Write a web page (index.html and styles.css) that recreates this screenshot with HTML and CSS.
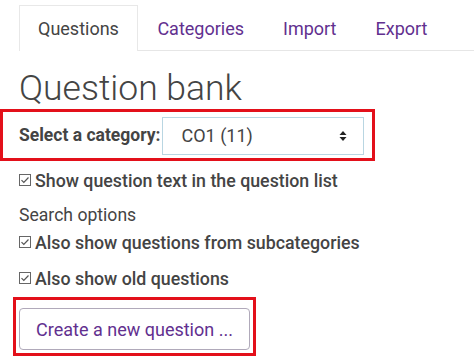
FILE: index.html
```html
<!DOCTYPE html>
<html>
<head>
<meta charset="utf-8">
<link rel="stylesheet" href="styles.css">
</head>
<body>
<div class="page">
  <ul class="tabs">
    <li class="tab active">Questions</li>
    <li class="tab">Categories</li>
    <li class="tab">Import</li>
    <li class="tab">Export</li>
  </ul>
  <h1 class="title">Question bank</h1>
  <div class="hl hl-cat">
    <label class="cat-label">Select a category:</label>
    <div class="select">
      <span>CO1 (11)</span>
      <svg class="arrows" width="8" height="12" viewBox="0 0 8 12"><path d="M4 1 L7.5 5 H0.5 Z M4 11 L0.5 7 H7.5 Z" fill="#222"/></svg>
    </div>
  </div>
  <div class="check first">
    <svg class="box" width="12" height="12" viewBox="0 0 12 12"><rect x="0.5" y="0.5" width="11" height="11" fill="#fff" stroke="#666"/><path d="M2.5 6.2 L4.8 8.5 L9.5 3.5" fill="none" stroke="#555" stroke-width="1.2"/></svg>
    <span>Show question text in the question list</span>
  </div>
  <div class="search">Search options</div>
  <div class="check second">
    <svg class="box" width="12" height="12" viewBox="0 0 12 12"><rect x="0.5" y="0.5" width="11" height="11" fill="#fff" stroke="#666"/><path d="M2.5 6.2 L4.8 8.5 L9.5 3.5" fill="none" stroke="#555" stroke-width="1.2"/></svg>
    <span>Also show questions from subcategories</span>
  </div>
  <div class="check third">
    <svg class="box" width="12" height="12" viewBox="0 0 12 12"><rect x="0.5" y="0.5" width="11" height="11" fill="#fff" stroke="#666"/><path d="M2.5 6.2 L4.8 8.5 L9.5 3.5" fill="none" stroke="#555" stroke-width="1.2"/></svg>
    <span>Also show old questions</span>
  </div>
  <div class="hl hl-btn">
    <button class="btn">Create a new question ...</button>
  </div>
</div>
</body>
</html>
```

FILE: styles.css
```css
html, body {
  margin: 0;
  padding: 0;
  background: #fff;
}
body {
  font-family: Roboto, "Liberation Sans", sans-serif;
  color: #444;
  width: 474px;
  height: 363px;
  overflow: hidden;
}
.page {
  padding: 5px 0 0 19px;
}
.tabs {
  list-style: none;
  margin: 0;
  padding: 0;
  display: flex;
  border-bottom: 1px solid #e6e6e6;
  height: 45px;
}
.tab {
  padding: 0 18.5px;
  font-size: 18px;
  line-height: 45px;
  color: #62308f;
  border: 1px solid transparent;
  border-bottom: none;
}
.tab.active {
  color: #444;
  border-color: #e8e8e8;
  background: #fff;
  margin-bottom: -1px;
  height: 45px;
  padding: 0 18px;
}
.title {
  margin: 17px 0 1px 0;
  font-weight: 300;
  font-size: 35.5px;
  line-height: 40px;
  color: #444;
}
.hl {
  border: 3px solid #e3101a;
}
.hl-cat {
  margin: 0 0 0 -19px;
  width: 353px;
  height: 46px;
  display: flex;
  align-items: center;
  padding-left: 16px;
  box-sizing: content-box;
}
.cat-label {
  font-size: 17.5px;
  font-weight: 700;
  color: #444;
}
.select {
  margin-left: 2px;
  margin-top: 1px;
  width: 202px;
  height: 38px;
  border: 1px solid #b9d6e2;
  display: flex;
  align-items: center;
  justify-content: space-between;
  padding: 0 16px 0 18px;
  box-sizing: border-box;
  font-size: 18px;
  color: #444;
}
.check {
  display: flex;
  align-items: center;
  gap: 4px;
  font-size: 17.8px;
  font-weight: 500;
  color: #444;
  height: 24px;
}
.check.first {
  margin-top: 7px;
}
.check.second {
  margin-top: 4px;
}
.check.third {
  margin-top: 12px;
}
.box {
  flex: none;
}
.search {
  font-size: 17.6px;
  color: #444;
  margin-top: 12px;
  height: 22px;
  line-height: 22px;
}
.hl-btn {
  margin: 7px 0 0 -6px;
  width: 231px;
  height: 42px;
  padding: 8px 3px 3px 3px;
  box-sizing: content-box;
}
.btn {
  display: block;
  width: 231px;
  height: 42px;
  border: 1px solid #b0a9ba;
  border-radius: 4px;
  background: #fff;
  font-family: Roboto, "Liberation Sans", sans-serif;
  font-size: 18px;
  color: #62308f;
  padding: 0;
}
```
